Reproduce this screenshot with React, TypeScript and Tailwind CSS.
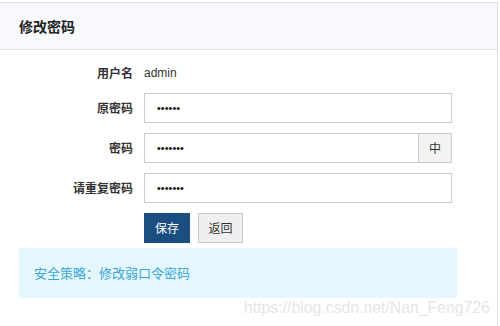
import React from "react";

const font = { fontFamily: '"Noto Sans CJK SC", "Noto Sans", Arial, sans-serif' };

function Dots({ n }: { n: number }) {
  return (
    <span
      className="text-[11px] text-[#111] leading-none"
      style={{ fontFamily: 'Arial, "Liberation Sans", sans-serif' }}
    >
      {"•".repeat(n)}
    </span>
  );
}

export default function App() {
  return (
    <div className="relative w-[500px] h-[326px] bg-white overflow-hidden" style={font}>
      <div className="mt-[2px] w-[498px] h-[324px] border-t border-r border-[#dedede]">
        <div className="h-[47px] bg-[#f8f9fd] border-b border-[#e1e1e1] flex items-center pl-[19px]">
          <span className="text-[14px] font-bold text-[#222]">修改密码</span>
        </div>
        <div className="pt-[13px] pl-[19px]">
          <div className="grid grid-cols-[114px_308px] gap-x-[11px] gap-y-[10px] text-[12px] text-[#333]">
            <div className="h-[20px] flex items-center justify-end font-bold">用户名</div>
            <div className="h-[20px] flex items-center" style={{ fontFamily: 'Arial, "Liberation Sans", sans-serif' }}>admin</div>

            <div className="h-[30px] flex items-center justify-end font-bold">原密码</div>
            <div className="h-[30px] border border-[#cccccc] flex items-center pl-[12px] bg-white">
              <Dots n={6} />
            </div>

            <div className="h-[30px] flex items-center justify-end font-bold">密码</div>
            <div className="h-[30px] border border-[#cccccc] flex bg-white">
              <div className="flex-1 flex items-center pl-[12px]">
                <Dots n={7} />
              </div>
              <div className="w-[33px] border-l border-[#cccccc] bg-[#f3f3f3] flex items-center justify-center text-[12px] text-[#333]">中</div>
            </div>

            <div className="h-[30px] flex items-center justify-end font-bold">请重复密码</div>
            <div className="h-[30px] border border-[#cccccc] flex items-center pl-[12px] bg-white">
              <Dots n={7} />
            </div>

            <div></div>
            <div className="flex gap-[8px]">
              <div className="w-[46px] h-[30px] bg-[#1b4f82] text-white flex items-center justify-center text-[12px]">保存</div>
              <div className="w-[45px] h-[30px] bg-[#efefef] border border-[#c6c6c6] text-[#333] flex items-center justify-center text-[12px]">返回</div>
            </div>
          </div>
          <div className="mt-[5px] w-[438px] h-[50px] bg-[#e4f7fd] flex items-center pl-[15px] text-[13px] text-[#3aa6d4]">
            安全策略：修改弱口令密码
          </div>
        </div>
      </div>
      <div
        className="absolute left-[244px] top-[297px] text-[15.8px] leading-[22px] text-[#e6e6e6] whitespace-nowrap"
        style={{ fontFamily: 'Arial, "Liberation Sans", sans-serif' }}
      >
        https://blog.csdn.net/Nan_Feng726
      </div>
    </div>
  );
}
